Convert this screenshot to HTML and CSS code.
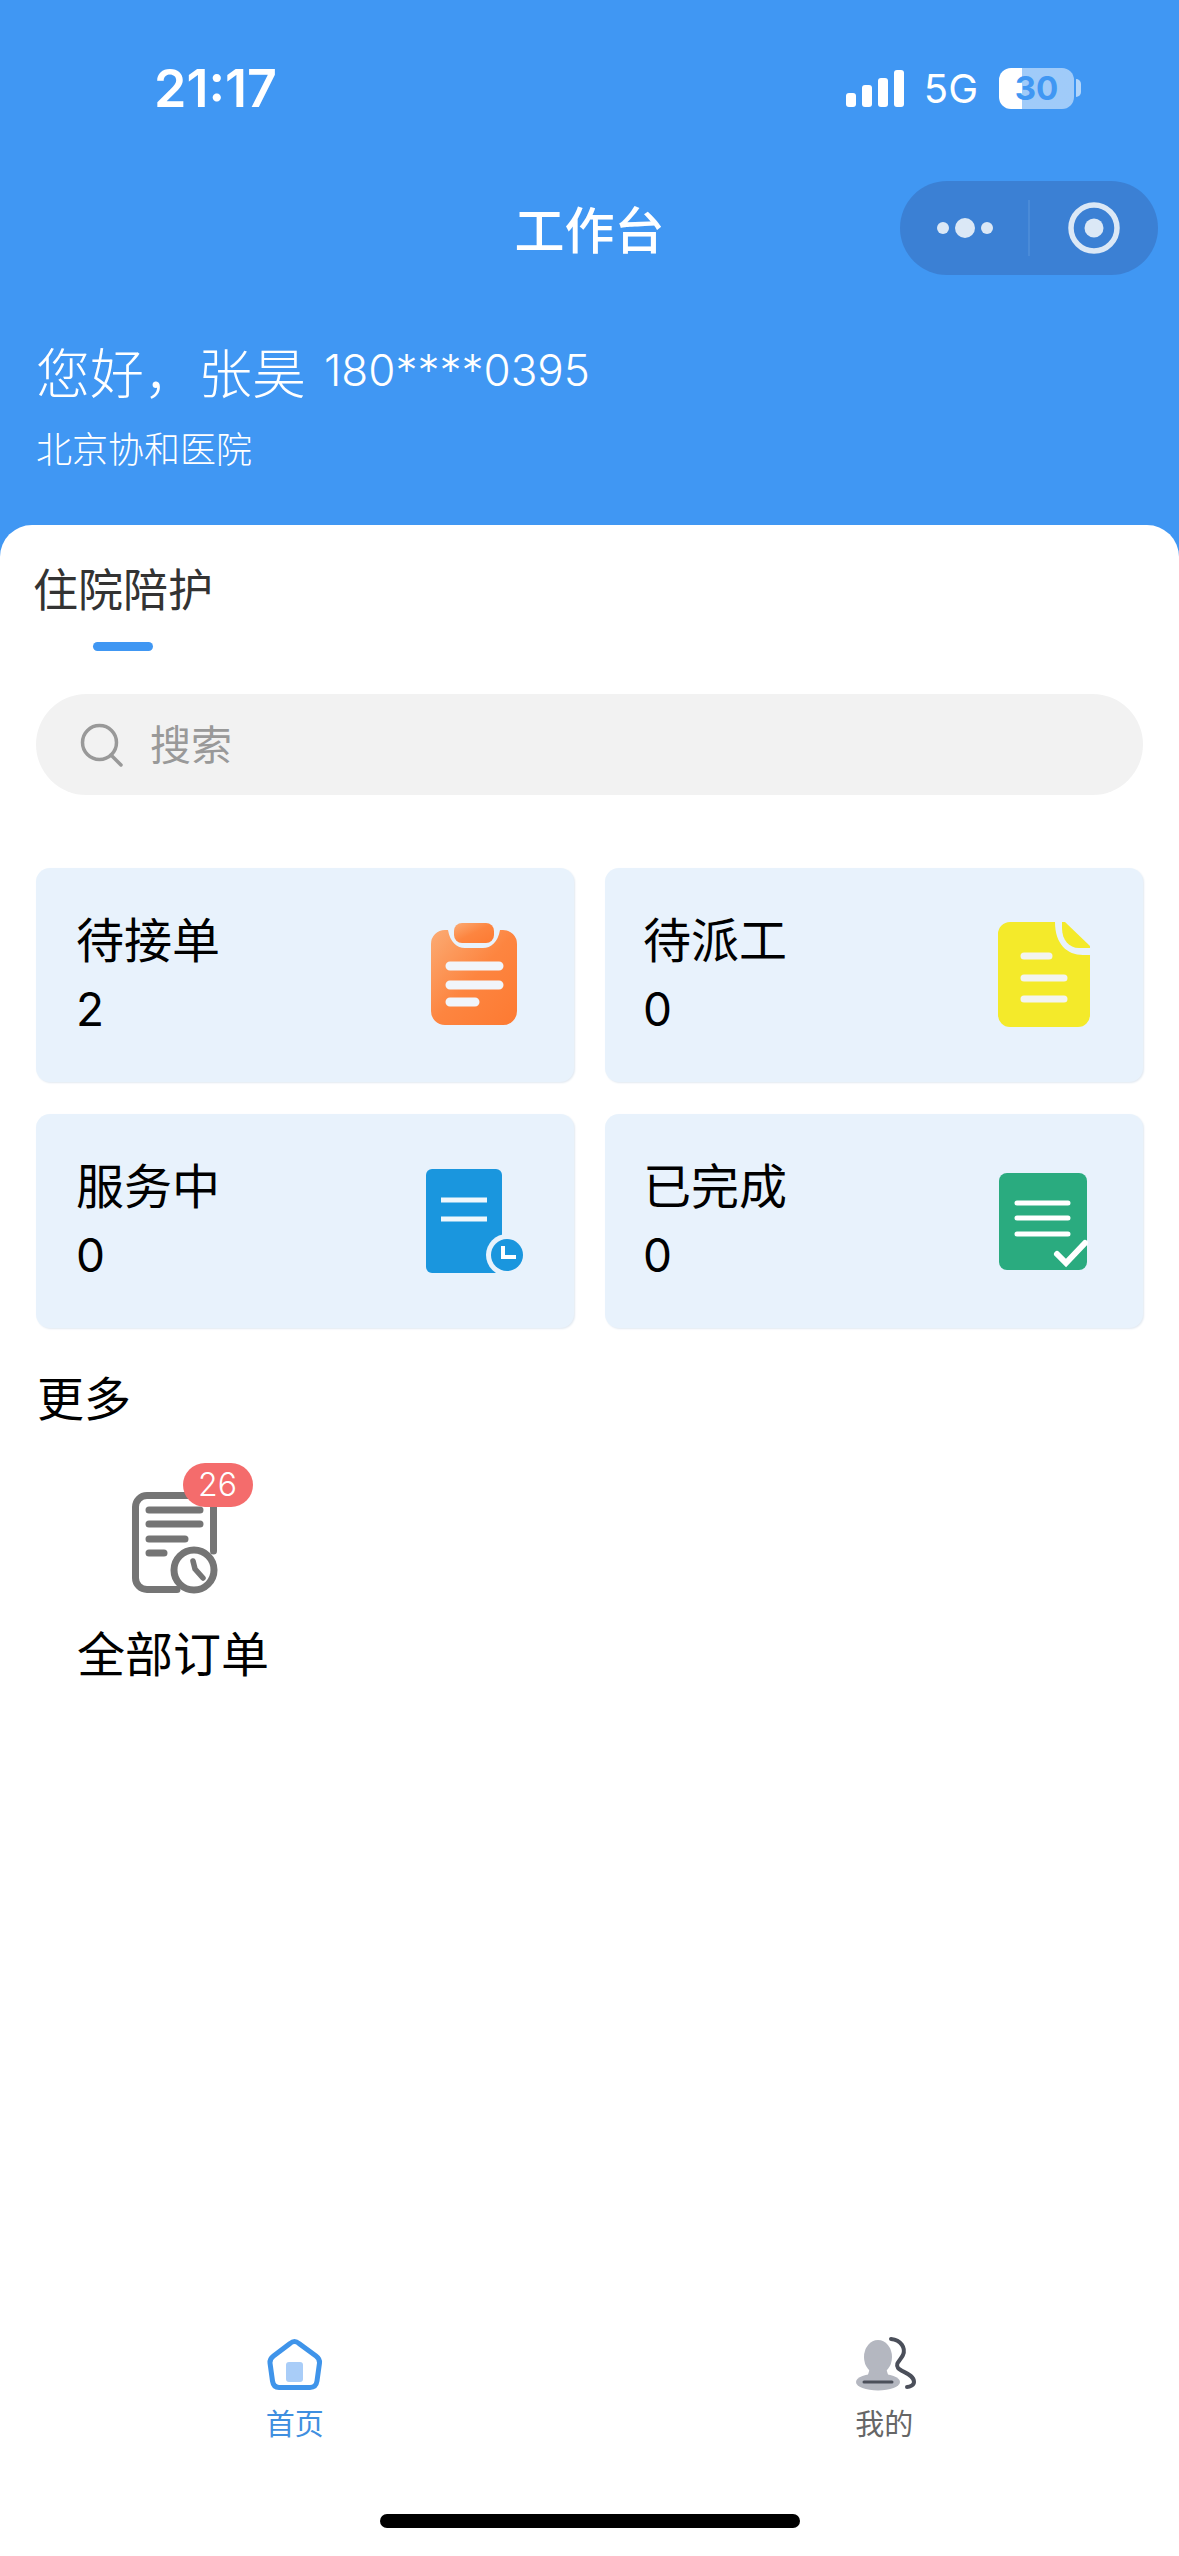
FILE: index.html
```html
<!DOCTYPE html>
<html lang="zh-CN">
<head>
  <meta charset="UTF-8" />
  <meta name="viewport" content="width=device-width, initial-scale=1.0"/>
  <title>工作台</title>
  <link rel="stylesheet" href="styles.css">
</head>
<body>

  <header class="header">
    <div class="status">
      <span class="time">21:17</span>
      <div class="status-right">
        <div class="signal">
          <i class="bar-1"></i><i class="bar-2"></i><i class="bar-3"></i><i class="bar-4"></i>
        </div>
        <span class="net">5G</span>
        <div class="battery">30</div>
        <i class="battery-nub"></i>
      </div>
    </div>

    <div class="nav">
      <h1 class="nav-title">工作台</h1>
      <svg class="capsule" viewBox="0 0 258 94">
        <rect width="258" height="94" rx="47" fill="#3b80d4"/>
        <circle cx="43" cy="47" r="6" fill="#dbe8f6"/>
        <circle cx="65" cy="47" r="10" fill="#dbe8f6"/>
        <circle cx="87" cy="47" r="6" fill="#dbe8f6"/>
        <rect x="128.5" y="19" width="1" height="56" fill="#5b95dc"/>
        <circle cx="194" cy="47" r="23" fill="none" stroke="#dbe8f6" stroke-width="5.500"/>
        <circle cx="194" cy="47" r="9.500" fill="#dbe8f6"/>
      </svg>
    </div>

    <div class="greeting">
      <span class="hello">您好，张昊</span>
      <span class="phone">180****0395</span>
    </div>
    <div class="hospital">北京协和医院</div>
  </header>

  <main class="main">
    <div class="tab">住院陪护</div>
    <div class="tab-line"></div>

    <div class="search">
      <svg class="search-icon" viewBox="0 0 44 44">
        <circle cx="19.500" cy="19.500" r="17" fill="none" stroke="#999" stroke-width="3.500"/>
        <path d="M31 32l10 10" fill="none" stroke="#999" stroke-width="3.500" stroke-linecap="round"/>
      </svg>
      <span>搜索</span>
    </div>

    <div class="cards">
      <div class="card">
        <div class="card-text">
          <div class="card-name">待接单</div>
          <div class="card-num">2</div>
        </div>
        <svg class="card-icon" viewBox="0 0 110 110">
          <defs>
            <linearGradient id="orange" x1="0" y1="0" x2="1" y2="1">
              <stop offset="0" stop-color="#fbab74"/>
              <stop offset="0.500" stop-color="#fd8540"/>
              <stop offset="1" stop-color="#fd7a32"/>
            </linearGradient>
          </defs>
          <path d="M26 10H29C31 22 38 28 46 28H64C72 28 79 22 81 10H84A14 14 0 0 1 98 24V91A14 14 0 0 1 84 105H26A14 14 0 0 1 12 91V24A14 14 0 0 1 26 10Z" fill="url(#orange)"/>
          <rect x="35" y="3" width="40" height="20" rx="8" fill="url(#orange)"/>
          <path d="M31 46H80M31 65H80M31 82H56" fill="none" stroke="#f1f5fb" stroke-width="9" stroke-linecap="round"/>
        </svg>
      </div>

      <div class="card">
        <div class="card-text">
          <div class="card-name">待派工</div>
          <div class="card-num">0</div>
        </div>
        <svg class="card-icon" viewBox="0 0 110 110">
          <path d="M21 2H66C66 24 78 35 94 35H101V95A12 12 0 0 1 89 107H21A12 12 0 0 1 9 95V14A12 12 0 0 1 21 2Z" fill="#f4ea2a"/>
          <path d="M73 2H76L101 26V28H90C80 28 73 20 73 8Z" fill="#f4ea2a"/>
          <path d="M35 36H60M35 58H75M35 79H75" fill="none" stroke="#f3f4ef" stroke-width="7" stroke-linecap="round"/>
        </svg>
      </div>

      <div class="card">
        <div class="card-text">
          <div class="card-name">服务中</div>
          <div class="card-num">0</div>
        </div>
        <svg class="card-icon" viewBox="0 0 110 110">
          <rect x="7" y="3" width="76" height="104" rx="6" fill="#1a96de"/>
          <path d="M22 34H68M22 53H68" fill="none" stroke="#f1f7fc" stroke-width="5"/>
          <circle cx="88" cy="89" r="21" fill="#e8f2fc"/>
          <circle cx="88" cy="89" r="16" fill="#1a96de"/>
          <path d="M84 80V91H97" fill="none" stroke="#fff" stroke-width="4"/>
        </svg>
      </div>

      <div class="card">
        <div class="card-text">
          <div class="card-name">已完成</div>
          <div class="card-num">0</div>
        </div>
        <svg class="card-icon" viewBox="0 0 110 110">
          <rect x="10" y="7" width="88" height="97" rx="8" fill="#2aab7f"/>
          <path d="M28 37H79M28 52H79M28 68H79" fill="none" stroke="#fff" stroke-width="5" stroke-linecap="round"/>
          <path d="M68 88L77 97L96 77" fill="none" stroke="#fff" stroke-width="6" stroke-linecap="round"/>
        </svg>
      </div>
    </div>

    <div class="more-title">更多</div>
    <div class="more">
      <div class="more-item">
        <div class="more-icon">
          <svg viewBox="0 0 100 115">
            <path d="M52 105.500H22A11.500 11.500 0 0 1 10.500 94V23A11.500 11.500 0 0 1 22 11.500H77A11.500 11.500 0 0 1 88.500 23V67" fill="none" stroke="#757575" stroke-width="7" stroke-linecap="round"/>
            <path d="M24 26H75M24 40H75M24 55H60M24 69H39" fill="none" stroke="#757575" stroke-width="7" stroke-linecap="round"/>
            <circle cx="69" cy="86" r="20" fill="#fff" stroke="#757575" stroke-width="7"/>
            <path d="M68 77L70 85L78 94" fill="none" stroke="#757575" stroke-width="5.500" stroke-linecap="round"/>
          </svg>
          <span class="badge">26</span>
        </div>
        <div class="more-label">全部订单</div>
      </div>
    </div>
  </main>

  <nav class="tabbar">
    <div class="tabbar-item active">
      <svg class="tabbar-icon" viewBox="0 0 64 56">
        <path d="M27 7.500Q31.500 3.500 36 7.500L53 20Q57 23 56.500 27L54 45Q53 51.500 47 51.500H16Q10.500 51.500 9.500 45L7 27Q6.500 23 10.500 20Z" fill="none" stroke="#3f94ea" stroke-width="5"/>
        <rect x="23" y="26" width="17" height="20" rx="3" fill="#a9cdf8"/>
      </svg>
      <span>首页</span>
    </div>
    <div class="tabbar-item">
      <svg class="tabbar-icon" viewBox="-2 0 64 56">
        <ellipse cx="24" cy="21" rx="14" ry="17" fill="#b4b7c0"/>
        <path d="M16 32H32L35 42H13Z" fill="#b4b7c0"/>
        <ellipse cx="24" cy="46" rx="22" ry="8.500" fill="#b4b7c0"/>
        <path d="M10 46H38" fill="none" stroke="#4b4f5a" stroke-width="3" stroke-linecap="round"/>
        <path d="M37 3C47 4 52 12 49 19C46 25 41 27 44 32C47 36 60 38 60 46C60 49 56 51 53 51" fill="none" stroke="#4b4f5a" stroke-width="4" stroke-linecap="round"/>
      </svg>
      <span>我的</span>
    </div>
  </nav>
  <div class="home-bar"></div>

</body>
</html>
```

FILE: styles.css
```css
:root {
  --blue: #4097f3;
  --card-bg: #e8f2fc;
  --cjk: "Noto Sans CJK SC", sans-serif;
  --latin: "Inter", "Noto Sans CJK SC", sans-serif;
}

* {
  box-sizing: border-box;
}

body {
  margin: 0;
  width: 1179px;
  height: 2556px;
  display: flex;
  flex-direction: column;
  overflow: hidden;
  background: #fff;
  font-family: var(--cjk);
  color: #000;
}

.header {
  height: 565px;
  padding-top: 64px;
  background: var(--blue);
  color: #fff;
}

.status {
  height: 48px;
  padding: 0 98px 0 154px;
  display: flex;
  align-items: center;
  justify-content: space-between;
}

.time {
  font-family: var(--latin);
  font-size: 52px;
  font-weight: 600;
}

.status-right {
  display: flex;
  align-items: center;
}

.signal {
  display: flex;
  align-items: flex-end;
  gap: 6px;
  height: 37px;
  margin-right: 20px;
}

.signal i {
  width: 10px;
  background: #fff;
  border-radius: 3px;
}

.bar-1 { height: 14px; }
.bar-2 { height: 22px; }
.bar-3 { height: 29px; }
.bar-4 { height: 37px; }

.net {
  font-family: var(--latin);
  font-size: 40px;
  margin-right: 21px;
}

.battery {
  width: 75px;
  height: 41px;
  border-radius: 12px;
  background: linear-gradient(90deg, #fff 31%, rgba(255, 255, 255, 0.5) 31%);
  color: var(--blue);
  font-family: var(--latin);
  font-size: 33px;
  font-weight: 700;
  line-height: 41px;
  text-align: center;
}

.battery-nub {
  width: 5px;
  height: 18px;
  margin-left: 2px;
  background: rgba(255, 255, 255, 0.6);
  border-radius: 0 9px 9px 0;
}

.nav {
  margin-top: 69px;
  padding: 0 21px;
  display: grid;
  grid-template-columns: 1fr auto 1fr;
  align-items: center;
}

.nav-title {
  grid-column: 2;
  margin: -2px 0 0;
  font-size: 50px;
  font-weight: 500;
  line-height: 94px;
}

.capsule {
  justify-self: end;
  width: 258px;
  height: 94px;
}

.greeting {
  margin-top: 65px;
  padding-left: 36px;
  display: flex;
  align-items: center;
  height: 60px;
}

.hello {
  font-size: 54px;
  font-weight: 300;
  margin-right: 18px;
}

.phone {
  font-family: var(--latin);
  font-size: 44px;
  font-weight: 300;
}

.hospital {
  margin-top: 22px;
  padding-left: 36px;
  font-size: 36px;
  font-weight: 300;
  line-height: 50px;
}

.main {
  position: relative;
  flex: 1;
  margin-top: -40px;
  padding: 33px 36px 0;
  background: #fff;
  border-radius: 32px 32px 0 0;
}

.tab {
  margin-left: -3px;
  font-size: 45px;
  line-height: 60px;
  color: #333;
}

.tab-line {
  width: 60px;
  height: 9px;
  margin: 24px 0 0 57px;
  background: var(--blue);
  border-radius: 5px;
}

.search {
  height: 101px;
  margin-top: 43px;
  padding-left: 44px;
  display: flex;
  align-items: center;
  background: #f2f2f2;
  border-radius: 51px;
  font-size: 41px;
  line-height: 97px;
  color: #999;
}

.search span {
  margin-top: -4px;
}

.search-icon {
  width: 44px;
  height: 44px;
  margin-right: 26px;
}

.cards {
  margin-top: 73px;
  display: grid;
  grid-template-columns: 538px 538px;
  grid-auto-rows: 214px;
  gap: 32px 31px;
}

.card {
  padding: 0 45px 0 40px;
  display: flex;
  align-items: center;
  justify-content: space-between;
  background: var(--card-bg);
  border-radius: 14px;
  box-shadow: 1px 1px 2px #e2e9f1;
}

.card:nth-child(even) {
  padding-left: 38px;
  padding-right: 44px;
}

.card-text {
  margin-top: -4px;
}

.card-name,
.card-num {
  line-height: 60px;
}

.card-name {
  font-size: 48px;
  margin-bottom: 12px;
}

.card-num {
  font-family: var(--latin);
  font-size: 46px;
}

.card-icon {
  width: 110px;
  height: 110px;
}

.more-title {
  margin: 38px 0 0 1px;
  font-size: 47px;
  line-height: 60px;
}

.more {
  margin-top: 37px;
  display: flex;
}

.more-item {
  margin-left: 21px;
  display: flex;
  flex-direction: column;
  align-items: center;
  width: 232px;
}

.more-icon {
  position: relative;
  width: 100px;
  height: 136px;
  margin-left: 3px;
  padding-top: 21px;
}

.more-icon svg {
  display: block;
  width: 100px;
  height: 115px;
}

.badge {
  position: absolute;
  top: 0;
  left: 58px;
  width: 70px;
  height: 44px;
  background: #f46c6c;
  border-radius: 22px;
  color: #fff;
  font-family: var(--latin);
  font-size: 32px;
  font-weight: 300;
  line-height: 44px;
  text-align: center;
}

.more-label {
  margin-top: 22px;
  font-size: 48px;
  line-height: 60px;
}

.tabbar {
  display: grid;
  grid-template-columns: 1fr 1fr;
}

.tabbar-item {
  display: flex;
  flex-direction: column;
  align-items: center;
  gap: 10px;
  font-size: 29px;
  line-height: 40px;
  color: #666;
}

.tabbar-item.active {
  color: #3f8fe0;
}

.tabbar-icon {
  display: block;
  height: 56px;
  width: 64px;
}

.home-bar {
  width: 420px;
  height: 14px;
  margin: 72px auto 28px;
  background: #000;
  border-radius: 7px;
}
```
